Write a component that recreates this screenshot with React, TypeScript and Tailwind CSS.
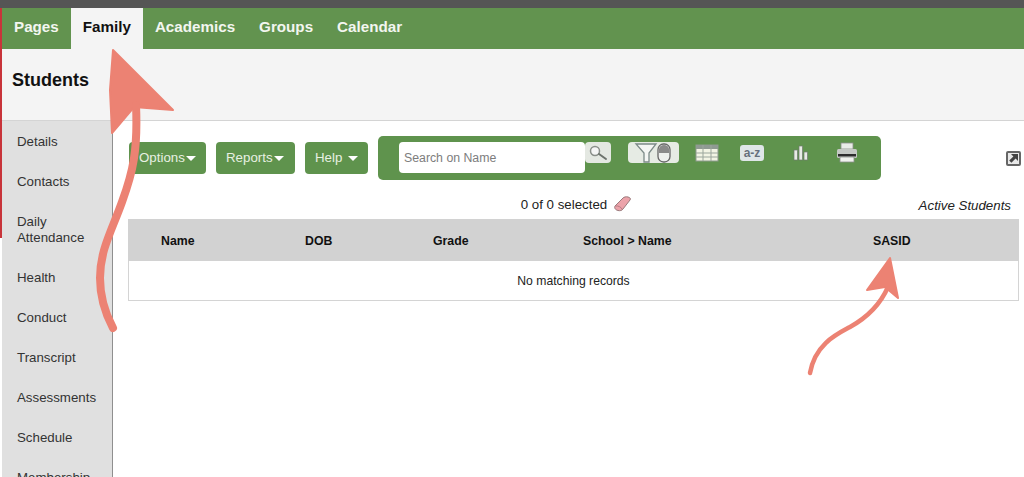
const tabs = ["Pages", "Family", "Academics", "Groups", "Calendar"];
const sideItems = ["Details", "Contacts", "Daily Attendance", "Health", "Conduct", "Transcript", "Assessments", "Schedule", "Membership"];

const ToolButton = ({ label, gap }: { label: string; gap: string }) => (
  <div className={`flex h-[32px] items-center rounded-[4px] bg-[#5f934d] px-[10px] text-[13.3px] text-[#e8f0e2] ${gap}`}>
    <span>{label}</span>
    <span className="h-0 w-0 border-x-[5px] border-t-[5px] border-x-transparent border-t-white" />
  </div>
);

const FilterIcon = () => (
  <svg width="50" height="22" viewBox="0 0 50 22">
    <path d="M7 2h20l-7 9v9h-5v-9z" fill="#f4f6f4" stroke="#7c8a88" strokeWidth="1.3" />
    <rect x="29" y="2" width="12" height="18" rx="5.5" fill="#eef0ee" stroke="#666" strokeWidth="1.3" />
    <path d="M30 7a5 4 0 0 1 10 0v4h-10z" fill="#8a8a8a" />
  </svg>
);

const GridIcon = () => (
  <svg width="24" height="20" viewBox="0 0 24 20">
    <rect x="1" y="2" width="22" height="16" fill="#f2f4e4" stroke="#8d9a8d" />
    <rect x="1" y="2" width="22" height="4" fill="#8f9a92" />
    <path d="M1 10h22M1 14h22M8 2v16M16 2v16" stroke="#9ba69c" strokeWidth="1" />
  </svg>
);

const BarsIcon = () => (
  <svg width="18" height="18" viewBox="0 0 18 18">
    <rect x="2" y="6" width="3.5" height="10" fill="#e8ebe6" stroke="#6f7a6e" strokeWidth="0.7" />
    <rect x="7" y="2" width="3.5" height="14" fill="#e8ebe6" stroke="#6f7a6e" strokeWidth="0.7" />
    <rect x="12" y="8" width="3.5" height="8" fill="#e8ebe6" stroke="#6f7a6e" strokeWidth="0.7" />
  </svg>
);

const PrinterIcon = () => (
  <svg width="24" height="22" viewBox="0 0 24 22">
    <rect x="6" y="1" width="12" height="6" fill="#e9ece8" stroke="#8a8f8a" strokeWidth="0.8" />
    <rect x="2" y="7" width="20" height="9" rx="1.5" fill="#c4c8c4" />
    <rect x="3" y="12" width="18" height="2.5" fill="#2d2d2d" />
    <rect x="5" y="15" width="14" height="5" fill="#f0f2ee" stroke="#8a8f8a" strokeWidth="0.8" />
  </svg>
);

export default function App() {
  return (
    <div className="relative flex h-[477px] w-[1024px] flex-col overflow-hidden bg-white font-['Liberation_Sans',Arial,sans-serif]">
      <div className="h-[8px] shrink-0 bg-[#555555]" />

      <div className="flex h-[41px] shrink-0 items-stretch bg-[#62934f] pl-[2px] text-[15.2px] font-bold text-[#f3f6f0]">
        {tabs.map((tab) => (
          <div
            key={tab}
            className={`flex items-center px-[12px] pb-[2px] ${tab === "Family" ? "bg-[#f4f4f4] text-[#111111]" : ""}`}
          >
            {tab}
          </div>
        ))}
      </div>

      <div className="flex h-[72px] shrink-0 items-start border-b border-[#d4d4d4] bg-[#f4f4f4] pl-[12px] pt-[20px] text-[18px] leading-[22px] font-bold text-[#111111]">
        Students
      </div>

      <div className="flex min-h-0 flex-1">
        <div className="ml-[2px] w-[111px] shrink-0 border-r border-[#8f8f8f] bg-[#e0e0e0] pt-[1px] text-[13.3px] leading-[16px] text-[#333333]">
          {sideItems.map((item) => (
            <div key={item} className="py-[12px] pl-[15px] pr-[4px]">
              {item}
            </div>
          ))}
        </div>

        <div className="min-w-0 flex-1 pl-[15px] pr-[5px]">
          <div className="flex items-center pl-[1px] pt-[15px]">
            <div className="flex h-[44px] items-center gap-[10px]">
              <ToolButton label="Options" gap="w-[77px] gap-[1px]" />
              <ToolButton label="Reports" gap="w-[79px] gap-[1px]" />
              <ToolButton label="Help" gap="w-[63px] gap-[6px]" />
            </div>
            <div className="ml-[10px] flex h-[44px] w-[503px] items-start rounded-[5px] bg-[#5f934d] pl-[21px] pt-[6px]">
              <div className="flex h-[31px] w-[186px] items-center rounded-[4px] bg-white pl-[5px] pt-[1px] text-[12.3px] text-[#7d7d7d]">
                Search on Name
              </div>
              <div className="flex h-[21px] w-[26px] items-center justify-center rounded-[4px] bg-[#e4e8e2]">
                <svg width="22" height="18" viewBox="0 0 22 18">
                  <circle cx="8" cy="7" r="4.5" fill="#f5f5f5" stroke="#8a8f8a" strokeWidth="1.5" />
                  <path d="M12 10l7 5" stroke="#6d736d" strokeWidth="2" strokeLinecap="round" />
                </svg>
              </div>
              <div className="ml-[17px] flex h-[21px] w-[51px] items-center justify-center rounded-[4px] bg-[#e6ebe4]">
                <FilterIcon />
              </div>
              <div className="ml-[16px] flex h-[21px] w-[24px] items-center justify-center">
                <GridIcon />
              </div>
              <div className="ml-[20px] flex h-[21px] w-[26px] items-center justify-center">
                <span className="rounded-[3px] bg-[#dfe6e8] px-[4px] text-[12px] leading-[16px] font-bold text-[#66707c]">a-z</span>
              </div>
              <div className="ml-[27px] flex h-[21px] w-[18px] items-center justify-center">
                <BarsIcon />
              </div>
              <div className="ml-[25px] flex h-[21px] w-[24px] items-center justify-center">
                <PrinterIcon />
              </div>
            </div>
            <div className="ml-auto mr-[-2px] flex h-[44px] items-center pt-[1px]">
              <div className="flex h-[15px] w-[15px] items-center justify-center rounded-[2px] border-2 border-[#666666] bg-[#e8e8e8]">
                <svg width="11" height="11" viewBox="0 0 11 11">
                  <path d="M3 1h7v7L7.6 5.6 3.4 9.8 1.2 7.6 5.4 3.4z" fill="#444444" />
                </svg>
              </div>
            </div>
          </div>

          <div className="relative flex h-[39px] items-end justify-center pb-[6px] pl-[6px] text-[13.3px] leading-[16px] text-[#222222]">
            <div className="flex items-end gap-[5px]">
              <span>0 of 0 selected</span>
              <svg width="20" height="18" viewBox="0 0 20 18">
                <path d="M3 11 L11 3 C12 2 14 1.5 16 2 C18 2.5 19 3.5 18 5 L11 14 C10 15.5 8 16 6 15.5 C3.5 15 2 13 3 11 Z" fill="#eca3aa" stroke="#9a7a7c" strokeWidth="1" />
                <path d="M3.5 11 C6 10.5 9 12 10 14" fill="none" stroke="#b87c84" strokeWidth="1" />
              </svg>
            </div>
            <span className="absolute bottom-[5px] right-[8px] text-[13.3px] italic leading-[16px]">Active Students</span>
          </div>

          <div className="grid h-[42px] grid-cols-[33px_144px_128px_150px_290px_1fr] items-center bg-[#d2d2d2] pt-[2px] text-[12.3px] font-bold text-[#111111]">
            <span />
            <span>Name</span>
            <span>DOB</span>
            <span>Grade</span>
            <span>School &gt; Name</span>
            <span>SASID</span>
          </div>
          <div className="flex h-[40px] items-center justify-center border-x border-b border-[#d4d4d4] pt-[1px] text-[12.2px] text-[#222222]">
            <span>No matching records</span>
          </div>
        </div>
      </div>

      <div className="absolute left-0 top-[8px] h-[230px] w-[2px] bg-[#c8343a]" />

      {/* hand drawn arrows on top of the screenshot */}
      <svg className="pointer-events-none absolute left-0 top-0" width="1024" height="477" viewBox="0 0 1024 477">
        <path d="M113 50 L173 110 L134 107 L112 133 L110 90 Z" fill="#ec8273" stroke="#ec8273" strokeWidth="2" strokeLinejoin="round" />
        <path d="M136 105 C138 150 133 172 122 202 C112 230 100 250 100 278 C100 298 106 315 113 328" fill="none" stroke="#ec8273" strokeWidth="8" strokeLinecap="round" />
        <path d="M810 373 C815 345 835 335 850 327 C868 317 880 305 888 287" fill="none" stroke="#ec8273" strokeWidth="4.5" strokeLinecap="round" />
        <path d="M890 258 L867 290 L885 287 L898 298 Z" fill="#ec8273" stroke="#ec8273" strokeWidth="2" strokeLinejoin="round" />
      </svg>
    </div>
  );
}
